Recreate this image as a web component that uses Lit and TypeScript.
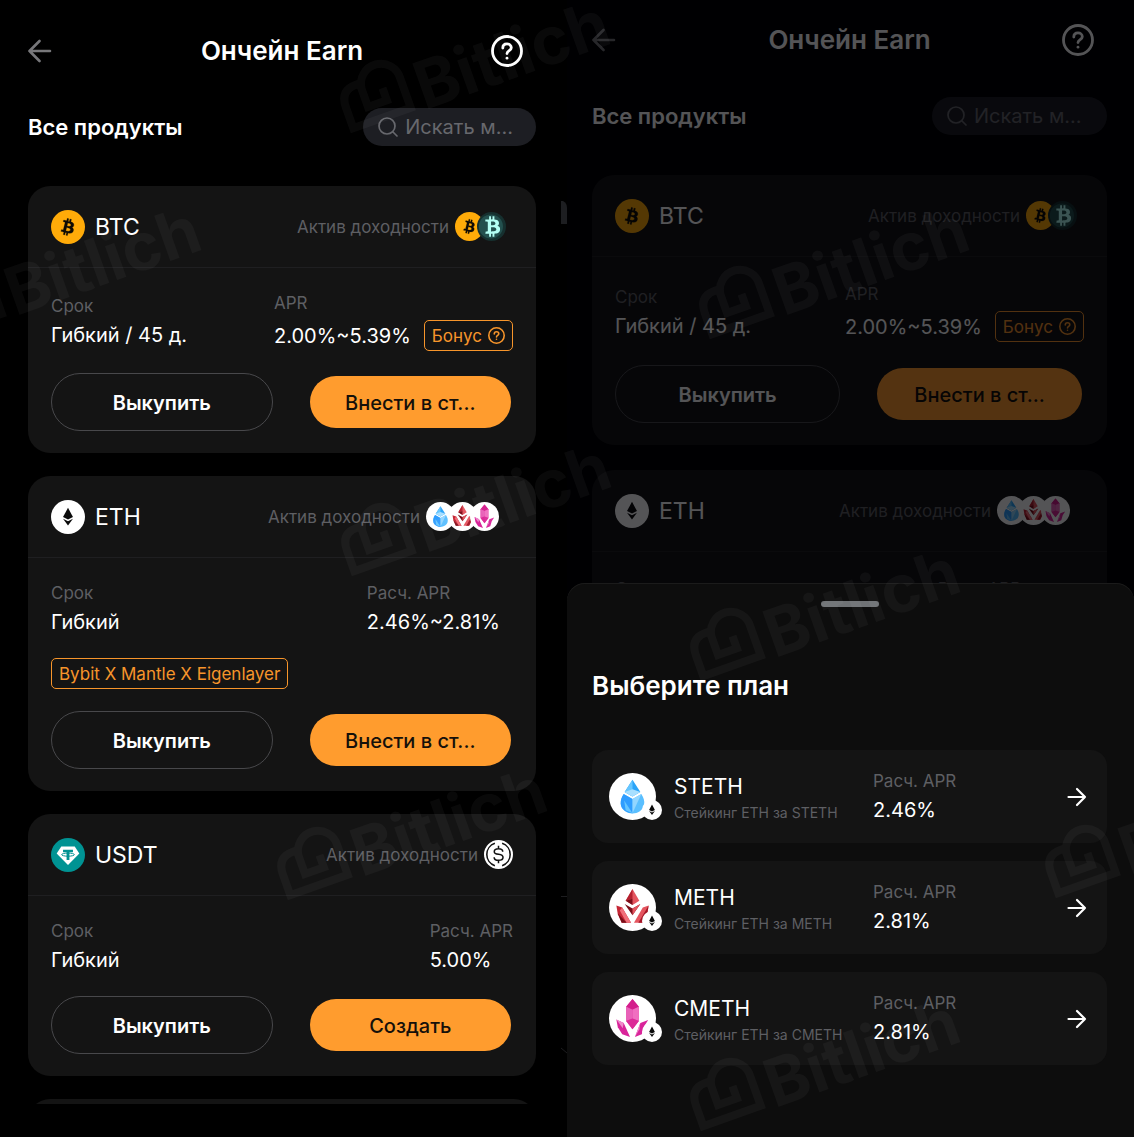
import { LitElement, html, svg, css, nothing } from "lit";
import { customElement, property } from "lit/decorators.js";

type Coin = "btc" | "bbtc" | "eth" | "usdt" | "usdc" | "steth" | "meth" | "cmeth";

interface Product {
  coin: Coin;
  symbol: string;
  yields: Coin[];
  term: string;
  aprLabel: string;
  apr: string;
  bonus?: boolean;
  tag?: string;
  action: string;
}

interface Plan {
  coin: Coin;
  name: string;
  note: string;
  apr: string;
}

const PRODUCTS: Product[] = [
  { coin: "btc", symbol: "BTC", yields: ["btc", "bbtc"], term: "Гибкий / 45 д.", aprLabel: "APR", apr: "2.00%~5.39%", bonus: true, action: "Внести в ст..." },
  { coin: "eth", symbol: "ETH", yields: ["steth", "meth", "cmeth"], term: "Гибкий", aprLabel: "Расч. APR", apr: "2.46%~2.81%", tag: "Bybit X Mantle X Eigenlayer", action: "Внести в ст..." },
  { coin: "usdt", symbol: "USDT", yields: ["usdc"], term: "Гибкий", aprLabel: "Расч. APR", apr: "5.00%", action: "Создать" },
];

const PLANS: Plan[] = [
  { coin: "steth", name: "STETH", note: "Стейкинг ETH за STETH", apr: "2.46%" },
  { coin: "meth", name: "METH", note: "Стейкинг ETH за METH", apr: "2.81%" },
  { coin: "cmeth", name: "CMETH", note: "Стейкинг ETH за CMETH", apr: "2.81%" },
];

const BITCOIN_SIGN =
  "M23.189 14.02c.314-2.096-1.283-3.223-3.465-3.975l.708-2.84-1.728-.43-.69 2.765c-.454-.114-.92-.22-1.385-.326l.695-2.783L15.596 6l-.708 2.839c-.376-.086-.746-.17-1.104-.26l.002-.009-2.384-.595-.46 1.846s1.283.294 1.256.312c.7.175.826.638.805 1.006l-.806 3.235c.048.012.11.03.18.057l-.183-.045-1.13 4.532c-.086.212-.303.531-.793.41.018.025-1.256-.313-1.256-.313l-.858 1.978 2.25.561c.418.105.828.215 1.231.318l-.715 2.872 1.727.43.708-2.84c.472.127.93.245 1.378.357l-.706 2.828 1.728.43.715-2.866c2.948.558 5.164.333 6.097-2.333.752-2.146-.037-3.385-1.588-4.192 1.13-.26 1.98-1.003 2.207-2.538zm-3.95 5.538c-.533 2.147-4.148.986-5.32.695l.95-3.805c1.172.293 4.929.872 4.37 3.11zm.535-5.569c-.487 1.953-3.495.96-4.47.717l.86-3.45c.975.243 4.118.696 3.61 2.733z";

const COINS = {
  btc: svg`
    <circle cx="24" cy="24" r="24" fill="#ffab09"/>
    <path d=${BITCOIN_SIGN} transform="translate(23.500 24) scale(1.22) translate(-16 -16)" fill="#0e0b05" stroke="#0e0b05" stroke-width="0.300"/>`,
  bbtc: svg`
    <circle cx="24" cy="24" r="24" fill="#16302f"/>
    <circle cx="23" cy="24" r="20" fill="#23504e"/>
    <path d=${BITCOIN_SIGN} transform="translate(25 24) rotate(-14) scale(1.75) translate(-16 -16)" fill="#b4fff4"/>`,
  eth: svg`
    <circle cx="24" cy="24" r="24" fill="#fff"/>
    <path d="M24 11 31 24 24 27.500 17 24Z" fill="#0a0a0a"/>
    <path d="M17 26.500 24 30 31 26.500 24 36Z" fill="#0a0a0a"/>`,
  usdt: svg`
    <circle cx="24" cy="24" r="24" fill="#009393"/>
    <path d="M14.500 12H33.500L40 22 24 38 8 22Z" fill="#fff"/>
    <path d="M17 16.500H31V20H26V31H22V20H17Z" fill="#009393"/>
    <ellipse cx="24" cy="23.500" rx="9" ry="2.200" fill="none" stroke="#009393" stroke-width="1.400"/>`,
  usdc: svg`
    <circle cx="24" cy="24" r="24" fill="#fff"/>
    <path d="M18 5.500A19.500 19.500 0 0 0 18 42.500M30 5.500A19.500 19.500 0 0 1 30 42.500" fill="none" stroke="#111" stroke-width="2.600"/>
    <path d="M31 19.500C31 16 28 14.500 24 14.500S17 16.200 17 19.300C17 26 31.500 21.500 31.500 28.600 31.500 32 28.300 33.700 24 33.700S16.800 32 16.800 28.500M24 9.500V14.500M24 33.700V38.500" fill="none" stroke="#111" stroke-width="2.500"/>`,
  steth: svg`
    <circle cx="24" cy="24" r="24" fill="#fff"/>
    <path d="M24 7 32 19.500 24 24 16 19.500Z" fill="#2aa4f8"/>
    <path d="M24 7V24L16 19.500Z" fill="#66c6ff"/>
    <path d="M24 16.500 32 19.500 24 24 16 19.500Z" fill="#a8dfff"/>
    <path d="M15 21.500 24 26.500 33 21.500C38 29 36.500 36 31.500 39 27 42 21 42 16.500 39 11.500 36 10 29 15 21.500Z" fill="#5abfff"/>
    <path d="M15 21.500 24 26.500V41C19 41 12 38 12 31 12 27 13 24.500 15 21.500Z" fill="#2f9dff"/>
    <path d="M15.500 28 24 41 17 38Z" fill="#66c6ff"/>
    <path d="M24 26.500 33 21.500 24 41Z" fill="#93d6ff"/>`,
  meth: svg`
    <circle cx="24" cy="24" r="24" fill="#fff"/>
    <path d="M24 5 31 17 24 21.500 17 17Z" fill="#e4555f"/>
    <path d="M24 5V15L17 17Z" fill="#b3202f"/>
    <path d="M17 17 24 15V21.500Z" fill="#7a0f1a"/>
    <path d="M16 20.500 24 25 32 20.500 24 32Z" fill="#7a0f1a"/>
    <path d="M24 25 32 20.500 24 32Z" fill="#e4555f"/>
    <path d="M7.500 22 13.500 24 22.500 39.500H13L9 31Z" fill="#c52736"/>
    <path d="M13.500 24 22.500 39.500H18L11 27Z" fill="#f0707a"/>
    <path d="M9 30 18 39.500H13Z" fill="#7a0f1a"/>
    <path d="M40.500 22 34.500 24 25.500 39.500H35L39 31Z" fill="#e4555f"/>
    <path d="M40.500 22 30 39.500H35L39 31Z" fill="#a31526"/>`,
  cmeth: svg`
    <circle cx="24" cy="24" r="24" fill="#fff"/>
    <path d="M24 4 30.500 12V26.500L24 35 17.500 26.500V12Z" fill="#e83fa8"/>
    <path d="M24 4 30.500 12 24 15 17.500 12Z" fill="#d41d8c"/>
    <path d="M24 15 30.500 12V26.500L24 24Z" fill="#f06fc0"/>
    <path d="M17.500 12 24 15V24L17.500 26.500Z" fill="#e861b8"/>
    <path d="M17.500 26.500 24 24 30.500 26.500 24 35Z" fill="#dc2a98"/>
    <path d="M7.500 25 15 28.500 21.500 43 13.500 40 9 33Z" fill="#d9249a"/>
    <path d="M7.500 25 15 28.500 14 34Z" fill="#f08acb"/>
    <path d="M40 25.500 32 28.500 26.500 43 33.500 40 36 32Z" fill="#d9249a"/>
    <path d="M32 28.500 26.500 43 31 35Z" fill="#f08acb"/>`,
};

const helpIcon = (stroke: number) => html`
  <svg class="help-glyph" viewBox="0 0 32 32" aria-hidden="true" fill="none" stroke="currentColor" stroke-width=${stroke} stroke-linecap="round" stroke-linejoin="round">
    <circle cx="16" cy="16" r="14.500"/>
    <path d="M11.800 13C11.800 10.400 13.600 8.900 16 8.900S20.300 10.500 20.300 12.700C20.300 15.600 16 15.600 16 18.600"/>
    <path d="M16 23.100V23.200"/>
  </svg>`;

@customElement("coin-icon")
export class CoinIcon extends LitElement {
  @property() coin: Coin = "btc";

  static styles = css`
    :host { display: block; flex: none; }
    .coin { display: block; width: 100%; height: 100%; }
  `;

  render() {
    return html`<svg class="coin" viewBox="0 0 48 48" aria-hidden="true">${COINS[this.coin]}</svg>`;
  }
}

@customElement("product-card")
export class ProductCard extends LitElement {
  @property({ attribute: false }) product!: Product;

  static styles = css`
    :host { display: block; flex: none; }
    .card { border-radius: 22px; background: #141414; color: #fff; }
    .head {
      display: flex; align-items: center; gap: 10px; box-sizing: border-box;
      height: 82px; padding: 0 23px; border-bottom: 1px solid #1f1f21;
    }
    .main-coin { width: 34px; height: 34px; }
    .symbol { margin: 0; flex: 1; font-size: 23px; line-height: 28px; font-weight: 400; }
    .yield { display: flex; align-items: center; gap: 6px; color: #5e5f63; font-size: 17px; line-height: 22px; }
    .stack { display: flex; }
    .stack-coin { width: 29px; height: 29px; margin-right: -7px; }
    .stack-coin:last-child { margin-right: 0; }
    .body { display: flex; flex-direction: column; gap: var(--body-gap, 22px); padding: var(--body-top, 24px) 23px 22px; }
    .facts { display: flex; align-items: center; justify-content: space-between; margin: 0; }
    .fact { display: flex; flex-direction: column; gap: 4px; }
    .fact.with-bonus { gap: 6px; }
    .label { color: #5e5f63; font-size: 17px; line-height: 22px; }
    .value { display: flex; align-items: center; margin: 0; font-size: 20px; line-height: 28px; }
    .apr { margin-right: 13px; }
    .badge {
      display: inline-flex; align-items: center; align-self: flex-start; gap: 6px; box-sizing: border-box;
      height: 31px; padding: 0 7px; border: 1px solid #f7952b; border-radius: 5px;
      background: none; color: #f7952b; font: inherit; font-size: 17px; line-height: 22px; white-space: nowrap;
    }
    .badge .help-glyph { width: 17px; height: 17px; }
    .actions { display: grid; grid-template-columns: 11fr 10fr; column-gap: 37px; align-items: center; padding-right: 2px; }
    .btn { box-sizing: border-box; border-radius: 29px; padding: 2px 0 0; font: inherit; font-size: 20px; line-height: 28px; white-space: nowrap; }
    .redeem { height: 58px; border: 1px solid #48484b; background: none; color: #fff; font-weight: 600; }
    .stake { height: 52px; border: 0; background: #ff9c2e; color: #15100a; font-weight: 500; }
  `;

  render() {
    const p = this.product;
    return html`
      <article class="card">
        <header class="head">
          <coin-icon class="main-coin" .coin=${p.coin}></coin-icon>
          <h3 class="symbol">${p.symbol}</h3>
          <div class="yield">
            <span>Актив доходности</span>
            <div class="stack" style="padding-right:${(p.yields.length - 1) * 7}px">
              ${p.yields.map((c) => html`<coin-icon class="stack-coin" .coin=${c}></coin-icon>`)}
            </div>
          </div>
        </header>
        <div class="body">
          <dl class="facts">
            <div class="fact">
              <dt class="label">Срок</dt>
              <dd class="value">${p.term}</dd>
            </div>
            <div class="fact ${p.bonus ? "with-bonus" : ""}">
              <dt class="label">${p.aprLabel}</dt>
              <dd class="value">
                <span class="apr">${p.apr}</span>
                ${p.bonus ? html`<button class="badge" type="button">Бонус ${helpIcon(3)}</button>` : nothing}
              </dd>
            </div>
          </dl>
          ${p.tag ? html`<span class="badge">${p.tag}</span>` : nothing}
          <div class="actions">
            <button class="btn redeem" type="button">Выкупить</button>
            <button class="btn stake" type="button">${p.action}</button>
          </div>
        </div>
      </article>`;
  }
}

@customElement("plan-row")
export class PlanRow extends LitElement {
  @property({ attribute: false }) plan!: Plan;

  static styles = css`
    :host { display: block; }
    .row {
      display: grid; grid-template-columns: 53px 187px 1fr 20px; column-gap: 12px; align-items: center;
      box-sizing: border-box; width: 100%; height: 93px; padding: 0 20px 0 17px; border: 0; border-radius: 16px;
      background: #141414; color: #fff; font: inherit; text-align: left;
    }
    .coin { position: relative; width: 47px; height: 47px; }
    .coin-main { width: 47px; height: 47px; }
    .coin-chain { position: absolute; right: -6px; bottom: 0; width: 20px; height: 20px; }
    .names { display: flex; flex-direction: column; gap: 2px; padding-top: 4px; white-space: nowrap; }
    .name { font-size: 21px; line-height: 26px; }
    .note { color: #5e5f63; font-size: 14px; line-height: 22px; }
    .rate { display: flex; flex-direction: column; gap: 4px; }
    .label { color: #5e5f63; font-size: 17px; line-height: 22px; }
    .value { font-size: 20px; line-height: 28px; }
    .arrow { display: block; width: 20px; height: 20px; }
  `;

  render() {
    const p = this.plan;
    return html`
      <button class="row" type="button">
        <span class="coin">
          <coin-icon class="coin-main" .coin=${p.coin}></coin-icon>
          <coin-icon class="coin-chain" .coin=${"eth" as Coin}></coin-icon>
        </span>
        <span class="names"><span class="name">${p.name}</span><span class="note">${p.note}</span></span>
        <span class="rate"><span class="label">Расч. APR</span><span class="value">${p.apr}</span></span>
        <svg class="arrow" viewBox="0 0 20 20" aria-hidden="true" fill="none" stroke="#fff" stroke-width="2.200" stroke-linecap="round" stroke-linejoin="round">
          <path d="M1.500 10H18M10 2 18 10 10 18"/>
        </svg>
      </button>`;
  }
}

/* Anchor of each stamp: the left end of the word's baseline. */
const STAMPS = [
  [425, 109], [16, 315], [426, 552], [362, 876],
  [784, 315], [775, 657], [1130, 874], [775, 1107],
];

@customElement("app-root")
export class AppRoot extends LitElement {
  static styles = css`
    :host {
      position: relative; display: grid; grid-template-columns: 1fr 1fr; height: 100vh; overflow: hidden;
      background: #000; color: #fff; font-family: Inter, "Liberation Sans", sans-serif;
    }
    .screen { position: relative; display: flex; flex-direction: column; min-width: 0; min-height: 0; overflow: hidden; }
    .page { display: flex; flex-direction: column; flex: 1; min-height: 0; }
    .list-page { padding: 24px 31px 33px 28px; }
    .dimmed-page { padding: 13px 27px 0 25px; --body-gap: 23px; --body-top: 26px; }
    .bar { display: grid; grid-template-columns: 44px 1fr 44px; align-items: center; flex: none; height: 54px; }
    .bar-title { margin: 0; text-align: center; font-size: 26px; line-height: 32px; font-weight: 600; }
    .icon-btn { display: flex; padding: 0; border: 0; background: none; color: #fff; }
    .back { color: #77777a; }
    .back-glyph { width: 24px; height: 24px; }
    .help { justify-self: end; margin-right: 13px; }
    .help-glyph { width: 32px; height: 32px; }
    .tools { display: flex; align-items: center; justify-content: space-between; flex: none; margin: 30px 0 40px; }
    .section-title { margin: 0; font-size: 22px; line-height: 28px; font-weight: 600; }
    .search {
      display: flex; align-items: center; gap: 6px; box-sizing: border-box; width: 34%; height: 38px;
      padding: 0 14px; border-radius: 19px; background: #1d1e23; color: #67686d;
    }
    .search-glyph { flex: none; width: 22px; height: 22px; }
    .search-input { flex: 1; width: 100%; min-width: 0; padding: 0; border: 0; outline: 0; background: none; color: #fff; font: inherit; font-size: 20px; line-height: 26px; }
    .search-input::placeholder { color: #67686d; opacity: 1; }
    .list { display: flex; flex-direction: column; gap: 23px; flex: 1; min-height: 0; overflow: hidden; }
    .dimmed-page .list { gap: 25px; }
    .next-card { flex: none; height: 82px; border-radius: 22px; background: #141414; }
    .shade { position: absolute; inset: 0; background: rgba(0, 0, 3, 0.67); }
    .sheet {
      position: absolute; left: 0; right: 0; bottom: 0; box-sizing: border-box; padding: 18px 27px 72px 25px;
      border-radius: 18px 18px 0 0; background: #0d0d0d; box-shadow: inset 0 1px 0 #1b1b1b;
    }
    .handle { width: 58px; height: 6px; margin: 0 auto 63px; border-radius: 3px; background: #6f7275; }
    .sheet-title { margin: 0 0 48px; font-size: 26px; line-height: 32px; font-weight: 600; }
    .plans { display: flex; flex-direction: column; gap: 18px; }
    .stamps { position: absolute; inset: 0; width: 100%; height: 100%; pointer-events: none; }
    .stamp-word { font-family: Inter, sans-serif; font-size: 66px; font-weight: 700; }
    .peek { position: absolute; right: 0; top: 0; width: 6px; height: 100%; }
  `;

  private top(suffix: string) {
    return html`
      <header class="bar">
        <button class="icon-btn back" type="button" aria-label="Назад">
          <svg class="back-glyph" viewBox="0 0 24 24" fill="none" stroke="currentColor" stroke-width="2.600" stroke-linecap="round" stroke-linejoin="round">
            <path d="M11.500 2 1.500 12 11.500 22M1.500 12H22"/>
          </svg>
        </button>
        <h1 class="bar-title">Ончейн Earn</h1>
        <button class="icon-btn help" type="button" aria-label="Справка">${helpIcon(2.8)}</button>
      </header>
      <div class="tools">
        <h2 class="section-title">Все продукты</h2>
        <label class="search" for="search-${suffix}">
          <svg class="search-glyph" viewBox="0 0 22 22" aria-hidden="true" fill="none" stroke="currentColor" stroke-width="1.700" stroke-linecap="round">
            <circle cx="10" cy="10" r="8"/><path d="M16 16 20 20"/>
          </svg>
          <input class="search-input" id="search-${suffix}" type="text" placeholder="Искать м..." aria-label="Поиск" />
        </label>
      </div>`;
  }

  private stamps() {
    return html`
      <svg class="stamps" aria-hidden="true" fill="#fff" opacity="0.035">
        ${STAMPS.map(([x, y]) => svg`
          <g transform="translate(${x} ${y}) rotate(-19.600)">
            <path d="M-72 -6H-13V-37A20 20 0 0 0 -53 -40M-74 -2V-28Q-74 -46 -57 -46H-53V-21H-33V-34" fill="none" stroke="#fff" stroke-width="8"/>
            <text class="stamp-word" x="-1" y="1">Bitlich</text>
          </g>`)}
      </svg>`;
  }

  render() {
    return html`
      <section class="screen">
        <div class="page list-page">
          ${this.top("list")}
          <div class="list">
            ${PRODUCTS.map((p) => html`<product-card .product=${p}></product-card>`)}
            <div class="next-card"></div>
          </div>
        </div>
        <svg class="peek" aria-hidden="true">
          <path d="M0 201H2Q6 203 6 208V224H0Z" fill="#1d1e21"/>
          <path d="M0 896.500H6M0 1048 6 1053" stroke="#1d1d1f" fill="none"/>
        </svg>
      </section>
      <section class="screen">
        <div class="page dimmed-page" inert>
          ${this.top("dimmed")}
          <div class="list">
            ${PRODUCTS.slice(0, 2).map((p) => html`<product-card .product=${p}></product-card>`)}
          </div>
        </div>
        <div class="shade"></div>
        <div class="sheet" role="dialog" aria-labelledby="sheet-title">
          <div class="handle"></div>
          <h2 class="sheet-title" id="sheet-title">Выберите план</h2>
          <div class="plans">
            ${PLANS.map((p) => html`<plan-row .plan=${p}></plan-row>`)}
          </div>
        </div>
      </section>
      ${this.stamps()}`;
  }
}
